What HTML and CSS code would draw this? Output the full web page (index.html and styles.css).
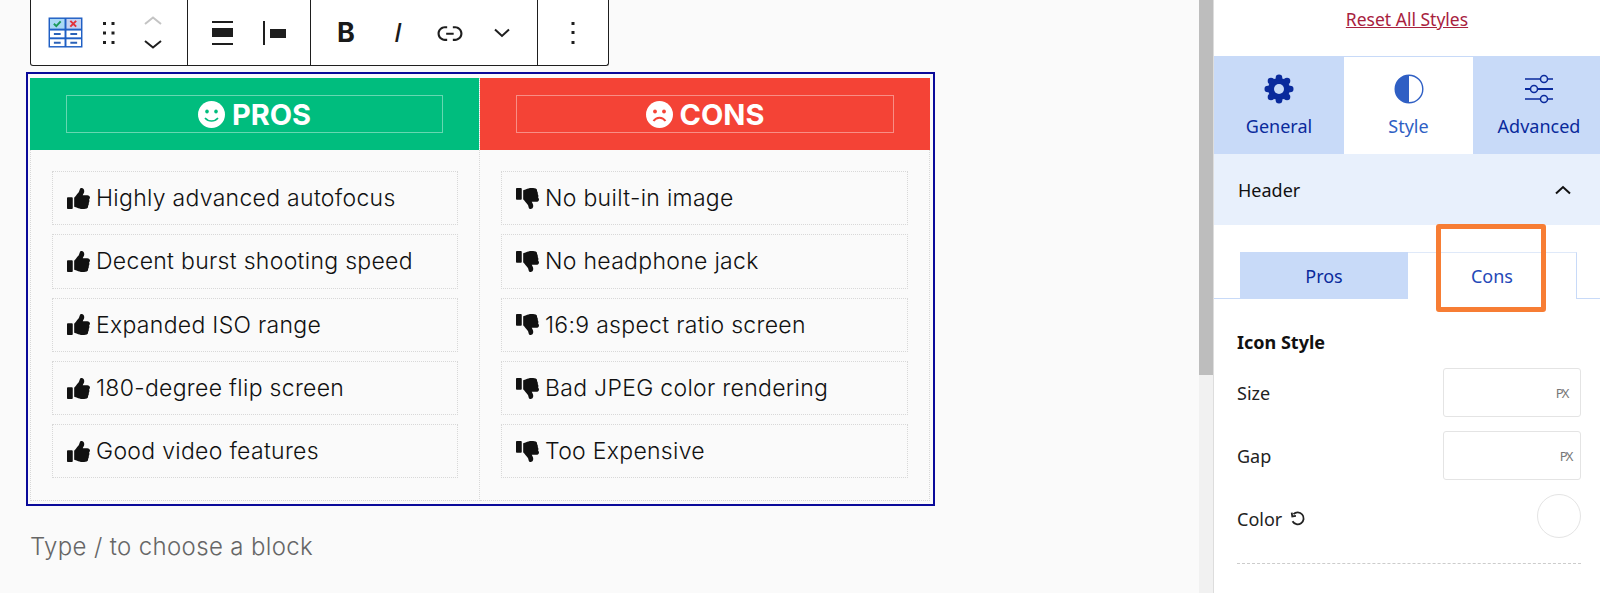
FILE: index.html
```html
<!DOCTYPE html>
<html lang="en">
<head>
    <meta charset="UTF-8">
    <meta name="viewport" content="width=device-width, initial-scale=1.0">
    <title>Pros and Cons block</title>
    <link rel="stylesheet" href="styles.css">
</head>
<body>
    <svg class="defs" width="0" height="0">
        <defs>
            <path id="thumb" d="M104 224H24c-13.255 0-24 10.745-24 24v240c0 13.255 10.745 24 24 24h80c13.255 0 24-10.745 24-24V248c0-13.255-10.745-24-24-24zM384 81.452c0 42.416-25.97 66.208-33.277 94.548h101.723c33.397 0 59.397 27.746 59.553 58.098.084 17.938-7.546 37.249-19.439 49.197l-.11.11c9.836 23.337 8.237 56.037-9.308 79.469 8.681 25.895-.069 57.704-16.382 74.757 4.298 17.598 2.244 32.575-6.148 44.632C440.202 511.587 389.616 512 346.839 512l-2.845-.001c-48.287-.017-87.806-17.598-119.56-31.725-15.957-7.099-36.821-15.887-52.651-16.178-6.54-.12-11.783-5.457-11.783-11.998v-213.77c0-3.2 1.282-6.271 3.558-8.521 39.614-39.144 56.648-80.587 89.117-113.111 14.804-14.832 20.188-37.236 25.393-58.902C282.515 39.293 291.817 0 312 0c24 0 72 8 72 81.452z"/>
            <g id="thumb-up"><use href="#thumb"/></g>
            <g id="thumb-down"><use href="#thumb" transform="matrix(1 0 0 -1 0 512)"/></g>
        </defs>
    </svg>

    <main class="editor">
        <div class="toolbar">
            <div class="tool-group first">
                <span class="tool tool-block">
                    <svg width="35" height="31" viewBox="0 0 36 32">
                        <rect x="0.5" y="0.5" width="35" height="31" fill="#1f5fc4"/>
                        <rect x="2" y="2" width="15" height="10" fill="#a9d8f5"/>
                        <rect x="19" y="2" width="15" height="10" fill="#c5d2f2"/>
                        <rect x="2" y="14" width="15" height="7" fill="#fff"/>
                        <rect x="19" y="14" width="15" height="7" fill="#fff"/>
                        <rect x="2" y="23" width="15" height="7" fill="#fff"/>
                        <rect x="19" y="23" width="15" height="7" fill="#fff"/>
                        <path d="M6 7l2.500 2.500L13 4.500" fill="none" stroke="#1c9a5a" stroke-width="2"/>
                        <path d="M23 4l6 6M29 4l-6 6" fill="none" stroke="#e2303a" stroke-width="2"/>
                        <path d="M6 17.500h7M23 17.500h7M6 26.500h7M23 26.500h7" stroke="#2a62b8" stroke-width="2"/>
                    </svg>
                </span>
                <span class="tool tool-drag">
                    <svg width="12" height="22" viewBox="0 0 12 22" fill="#1e1e1e">
                        <rect x="0" y="0" width="3" height="3"/><rect x="8.500" y="0" width="3" height="3"/>
                        <rect x="0" y="9.500" width="3" height="3"/><rect x="8.500" y="9.500" width="3" height="3"/>
                        <rect x="0" y="19" width="3" height="3"/><rect x="8.500" y="19" width="3" height="3"/>
                    </svg>
                </span>
                <span class="tool tool-move">
                    <svg width="18" height="9" viewBox="0 0 18 9" fill="none" stroke="#c4c4c4" stroke-width="2"><path d="M1 8L9 1.500 17 8"/></svg>
                    <svg width="18" height="9" viewBox="0 0 18 9" fill="none" stroke="#1e1e1e" stroke-width="2"><path d="M1 1l8 6.500L17 1"/></svg>
                </span>
            </div>
            <div class="tool-group align">
                <span class="tool">
                    <svg width="21" height="24" viewBox="0 0 21 24" fill="#1e1e1e">
                        <rect x="0" y="0" width="21" height="2"/>
                        <rect x="0" y="7" width="21" height="9"/>
                        <rect x="0" y="22" width="21" height="2"/>
                    </svg>
                </span>
                <span class="tool">
                    <svg width="23" height="24" viewBox="0 0 23 24" fill="#1e1e1e">
                        <rect x="0" y="0" width="2" height="24"/>
                        <rect x="7" y="8" width="16" height="9"/>
                    </svg>
                </span>
            </div>
            <div class="tool-group">
                <span class="tool tool-bold">B</span>
                <span class="tool tool-italic">I</span>
                <span class="tool">
                    <svg width="34" height="34" viewBox="0 0 24 24" fill="#1e1e1e"><path d="M15.600 7.200H14v1.500h1.600c2 0 3.700 1.700 3.700 3.700s-1.700 3.700-3.700 3.700H14v1.500h1.600c2.800 0 5.200-2.300 5.200-5.200 0-2.900-2.300-5.200-5.200-5.200zM4.700 12.400c0-2 1.700-3.700 3.700-3.700H10V7.200H8.400c-2.900 0-5.200 2.300-5.200 5.200 0 2.900 2.300 5.200 5.200 5.200H10v-1.500H8.400c-2 0-3.700-1.700-3.700-3.700zm4.600.9h5.300v-1.500H9.300v1.500z"/></svg>
                </span>
                <span class="tool">
                    <svg width="16" height="10" viewBox="0 0 16 10" fill="none" stroke="#1e1e1e" stroke-width="2"><path d="M1 1.500l7 6.500 7-6.500"/></svg>
                </span>
            </div>
            <div class="tool-group last">
                <svg width="4" height="22" viewBox="0 0 4 22" fill="#1e1e1e">
                    <rect x="0.500" y="0" width="3" height="3"/><rect x="0.500" y="9" width="3" height="3"/><rect x="0.500" y="19" width="3" height="3"/>
                </svg>
            </div>
        </div>

        <div class="pros-cons">
            <div class="pc-inner">
                <section class="pc-col">
                    <div class="pc-head pros-head">
                        <div class="pc-title">
                            <svg class="face" width="27" height="27" viewBox="0 0 27 27">
                                <circle cx="13.500" cy="13.500" r="13.500" fill="#fff"/>
                                <ellipse cx="9" cy="10.500" rx="1.800" ry="2.100" fill="#00bd7e"/>
                                <ellipse cx="18" cy="10.500" rx="1.800" ry="2.100" fill="#00bd7e"/>
                                <path d="M7 17c3.500 4 9.500 4 13 0" fill="none" stroke="#00bd7e" stroke-width="1.600"/>
                            </svg>
                            <span>PROS</span>
                        </div>
                    </div>
                    <ul class="pc-list">
                        <li><svg class="thumb" viewBox="0 0 512 512" preserveAspectRatio="none"><use href="#thumb-up"/></svg>Highly advanced autofocus</li>
                        <li><svg class="thumb" viewBox="0 0 512 512" preserveAspectRatio="none"><use href="#thumb-up"/></svg>Decent burst shooting speed</li>
                        <li><svg class="thumb" viewBox="0 0 512 512" preserveAspectRatio="none"><use href="#thumb-up"/></svg>Expanded ISO range</li>
                        <li><svg class="thumb" viewBox="0 0 512 512" preserveAspectRatio="none"><use href="#thumb-up"/></svg>180-degree flip screen</li>
                        <li><svg class="thumb" viewBox="0 0 512 512" preserveAspectRatio="none"><use href="#thumb-up"/></svg>Good video features</li>
                    </ul>
                </section>
                <section class="pc-col">
                    <div class="pc-head cons-head">
                        <div class="pc-title">
                            <svg class="face" width="27" height="27" viewBox="0 0 27 27">
                                <circle cx="13.500" cy="13.500" r="13.500" fill="#fff"/>
                                <ellipse cx="9" cy="10.500" rx="1.900" ry="2.100" fill="#f44336"/>
                                <ellipse cx="18" cy="10.500" rx="1.900" ry="2.100" fill="#f44336"/>
                                <path d="M7.500 20c3-4.500 9-4.500 12 0" fill="none" stroke="#f44336" stroke-width="2"/>
                            </svg>
                            <span>CONS</span>
                        </div>
                    </div>
                    <ul class="pc-list">
                        <li><svg class="thumb" viewBox="0 0 512 512" preserveAspectRatio="none"><use href="#thumb-down"/></svg>No built-in image</li>
                        <li><svg class="thumb" viewBox="0 0 512 512" preserveAspectRatio="none"><use href="#thumb-down"/></svg>No headphone jack</li>
                        <li><svg class="thumb" viewBox="0 0 512 512" preserveAspectRatio="none"><use href="#thumb-down"/></svg>16:9 aspect ratio screen</li>
                        <li><svg class="thumb" viewBox="0 0 512 512" preserveAspectRatio="none"><use href="#thumb-down"/></svg>Bad JPEG color rendering</li>
                        <li><svg class="thumb" viewBox="0 0 512 512" preserveAspectRatio="none"><use href="#thumb-down"/></svg>Too Expensive</li>
                    </ul>
                </section>
            </div>
        </div>

        <p class="placeholder">Type / to choose a block</p>
    </main>

    <div class="scrollbar"><div class="scroll-thumb"></div></div>

    <aside class="sidebar">
        <div class="reset-row"><a class="reset-link" href="#">Reset All Styles</a></div>

        <div class="main-tabs">
            <div class="main-tab">
                <svg width="30" height="30" viewBox="0 0 30 30">
                    <g fill="#0a2a9c">
                        <circle cx="15" cy="15" r="11"/>
                        <circle cx="15" cy="3.800" r="3.300"/><circle cx="15" cy="26.200" r="3.300"/>
                        <circle cx="3.800" cy="15" r="3.300"/><circle cx="26.200" cy="15" r="3.300"/>
                        <circle cx="7" cy="7" r="3.300"/><circle cx="23" cy="7" r="3.300"/>
                        <circle cx="7" cy="23" r="3.300"/><circle cx="23" cy="23" r="3.300"/>
                    </g>
                    <circle cx="15" cy="15" r="5" fill="#c8daf8"/>
                </svg>
                <span>General</span>
            </div>
            <div class="main-tab active">
                <svg width="30" height="30" viewBox="0 0 30 30">
                    <circle cx="15" cy="15" r="13.800" fill="#fff" stroke="#2f5fc4" stroke-width="1.400"/>
                    <path d="M15 1.200a13.800 13.800 0 0 0 0 27.600z" fill="#2f5fc4"/>
                </svg>
                <span>Style</span>
            </div>
            <div class="main-tab advanced">
                <svg width="30" height="30" viewBox="0 0 30 30" fill="none" stroke="#0a2a9c">
                    <path d="M1 5h15M24 5h5M1 25h15M24 25h5" stroke-width="1.300"/>
                    <path d="M1 15h5M14 15h15" stroke-width="2"/>
                    <circle cx="20" cy="5" r="3.500" stroke-width="1.500"/>
                    <circle cx="10" cy="15" r="3.500" stroke-width="1.500"/>
                    <circle cx="20" cy="25" r="3.500" stroke-width="1.500"/>
                </svg>
                <span>Advanced</span>
            </div>
        </div>

        <div class="panel-head">
            <span>Header</span>
            <svg width="16" height="10" viewBox="0 0 16 10" fill="none" stroke="#111" stroke-width="2"><path d="M1 8.500l7-6.500 7 6.500"/></svg>
        </div>

        <div class="sub-tabs">
            <div class="sub-tab on">Pros</div>
            <div class="sub-tab off">Cons</div>
        </div>

        <div class="fields">
            <h3>Icon Style</h3>
            <div class="field">
                <label>Size</label>
                <div class="num-input"><span>PX</span></div>
            </div>
            <div class="field">
                <label>Gap</label>
                <div class="num-input tight"><span>PX</span></div>
            </div>
            <div class="field color-field">
                <label class="color-label">Color
                    <svg width="16" height="16" viewBox="0 0 14 14" fill="none" stroke="#222" stroke-width="1.600">
                        <path d="M3 2.800A5.200 5.200 0 1 1 2.200 9"/>
                        <path d="M1.500 1.500l.5 3.200 3.200-.4"/>
                    </svg>
                </label>
                <div class="color-dot"></div>
            </div>
            <div class="divider"></div>
        </div>

        <div class="highlight"></div>
    </aside>
</body>
</html>
```

FILE: styles.css
```css
* {
    box-sizing: border-box;
}
html, body {
    height: 593px;
    overflow: hidden;
}
body {
    margin: 0;
    display: flex;
    background: #fafafa;
    font-family: 'Inter', sans-serif;
    color: #1a1a1a;
}
.defs {
    position: absolute;
}

/* editor side */
.editor {
    width: 1199px;
    flex: none;
    padding-left: 26px;
}
.toolbar {
    display: flex;
    width: 579px;
    height: 66px;
    margin-left: 4px;
    background: #fff;
    border: 1px solid #1e1e1e;
    border-top: none;
    border-radius: 0 0 3px 3px;
}
.tool-group {
    display: flex;
    align-items: center;
    padding: 0 9px;
    border-right: 1px solid #1e1e1e;
}
.tool-group.first {
    width: 157px;
    padding: 0;
}
.tool-group.align {
    padding: 0 10px 0 8px;
}
.tool-group.last {
    flex: 1;
    justify-content: center;
    padding: 0;
    border-right: none;
}
.tool {
    width: 52px;
    display: flex;
    flex-direction: column;
    align-items: center;
    justify-content: center;
}
.tool-block {
    width: 68px;
}
.tool-drag {
    width: 20px;
}
.tool-move {
    width: 68px;
    gap: 15px;
}
.tool-bold {
    font-family: 'Inter', sans-serif;
    font-weight: 700;
    font-size: 27px;
    line-height: 34px;
}
.tool-italic {
    font-family: 'Liberation Sans', sans-serif;
    font-style: italic;
    font-size: 28px;
    line-height: 34px;
}

.pros-cons {
    width: 909px;
    height: 434px;
    margin-top: 6px;
    padding: 4px 3px 3px 2px;
    border: 2px solid #0a0a9a;
}
.pc-inner {
    display: grid;
    grid-template-columns: 450px 450px;
    height: 100%;
}
.pc-col {
    border: 1px dotted #d8d8d8;
    border-top: none;
}
.pc-col + .pc-col {
    border-left: none;
}
.pc-head {
    height: 72px;
    margin: 0 -1px;
    padding: 17px 36px 17px;
    color: #fff;
}
.pros-head {
    background: #00bd7e;
    margin-right: 0;
}
.cons-head {
    background: #f44336;
    margin-left: 0;
}
.pc-title {
    height: 38px;
    display: flex;
    align-items: center;
    justify-content: center;
    gap: 7px;
    border: 1px solid rgba(255, 255, 255, 0.4);
    font-size: 29px;
    font-weight: 700;
}
.pc-list {
    list-style: none;
    margin: 0;
    padding: 21px 21px 0;
    display: flex;
    flex-direction: column;
    gap: 9px;
}
.pc-list li {
    height: 54.3px;
    display: flex;
    align-items: center;
    gap: 6px;
    padding-left: 14px;
    border: 1px dotted #d8d8d8;
    font-size: 23px;
    font-weight: 300;
    letter-spacing: 0.3px;
    color: #111;
}
.thumb {
    width: 23px;
    height: 21px;
    fill: #111;
    flex: none;
}
.placeholder {
    margin: 26px 0 0 4px;
    font-size: 24px;
    font-weight: 300;
    letter-spacing: 0.35px;
    color: #666;
}

.scrollbar {
    width: 14px;
    flex: none;
    background: #f1f1f1;
}
.scroll-thumb {
    height: 375px;
    background: #bdbdbd;
}

/* settings side */
.sidebar {
    position: relative;
    flex: 1;
    background: #fff;
    border-left: 1px solid #ddd;
    font-family: 'Noto Sans', sans-serif;
}
.reset-row {
    height: 56px;
    padding-top: 7px;
    text-align: center;
    font-size: 17.500px;
}
.reset-link {
    color: #a8213e;
}
.main-tabs {
    display: grid;
    grid-template-columns: 130px 129px 1fr;
    height: 98px;
    background: #c8daf8;
}
.main-tab {
    display: flex;
    flex-direction: column;
    align-items: center;
    padding-top: 18px;
    gap: 10px;
    font-size: 18px;
    line-height: 24px;
    color: #0a2a9c;
}
.main-tab.active {
    background: #fff;
    border-top: 1px solid #c8daf8;
    padding-top: 17px;
    color: #2f5fc4;
}
.main-tab.advanced {
    padding-left: 5px;
}
.panel-head {
    height: 71px;
    display: flex;
    align-items: center;
    justify-content: space-between;
    padding: 0 29px 0 24px;
    background: #e8f0fc;
    font-size: 18px;
    color: #111;
}
.sub-tabs {
    display: flex;
    margin-top: 27px;
    height: 47px;
    padding-left: 26px;
    padding-right: 23px;
    box-shadow: inset 0 -1px 0 #c8daf8;
}
.sub-tab {
    flex: 1;
    display: flex;
    align-items: center;
    justify-content: center;
    font-size: 18px;
}
.sub-tab.on {
    background: #c8daf8;
    color: #0a2a9c;
}
.sub-tab.off {
    background: #fff;
    color: #2348b8;
    border-top: 1px solid #dfe9f9;
    border-right: 1px solid #c8daf8;
}
.fields {
    padding: 0 19px 0 23px;
}
.fields h3 {
    margin: 0;
    padding-top: 32px;
    height: 69px;
    font-size: 18px;
    line-height: 22px;
    font-weight: 700;
    color: #111;
}
.field {
    display: flex;
    align-items: center;
    justify-content: space-between;
    height: 49px;
    margin-bottom: 14px;
    font-size: 18px;
    color: #222;
}
.color-field {
    height: 44px;
    margin-top: 1px;
    margin-bottom: 0;
}
.color-label {
    display: flex;
    align-items: center;
    gap: 8px;
    padding-top: 6px;
}
.num-input {
    width: 138px;
    height: 49px;
    display: flex;
    align-items: center;
    justify-content: flex-end;
    padding-right: 12px;
    border: 1px solid #e4e4e4;
    border-radius: 3px;
    font-size: 13px;
    letter-spacing: -1.500px;
    color: #777;
}
.num-input.tight {
    padding-right: 8px;
}
.color-dot {
    width: 44px;
    height: 44px;
    border: 1px solid #e4e4e4;
    border-radius: 50%;
}
.divider {
    margin-top: 25px;
    border-top: 1px dashed #ccc;
}
.highlight {
    position: absolute;
    left: 222px;
    top: 224px;
    width: 110px;
    height: 88px;
    border: 5px solid #f77d34;
    border-radius: 3px;
}
```
